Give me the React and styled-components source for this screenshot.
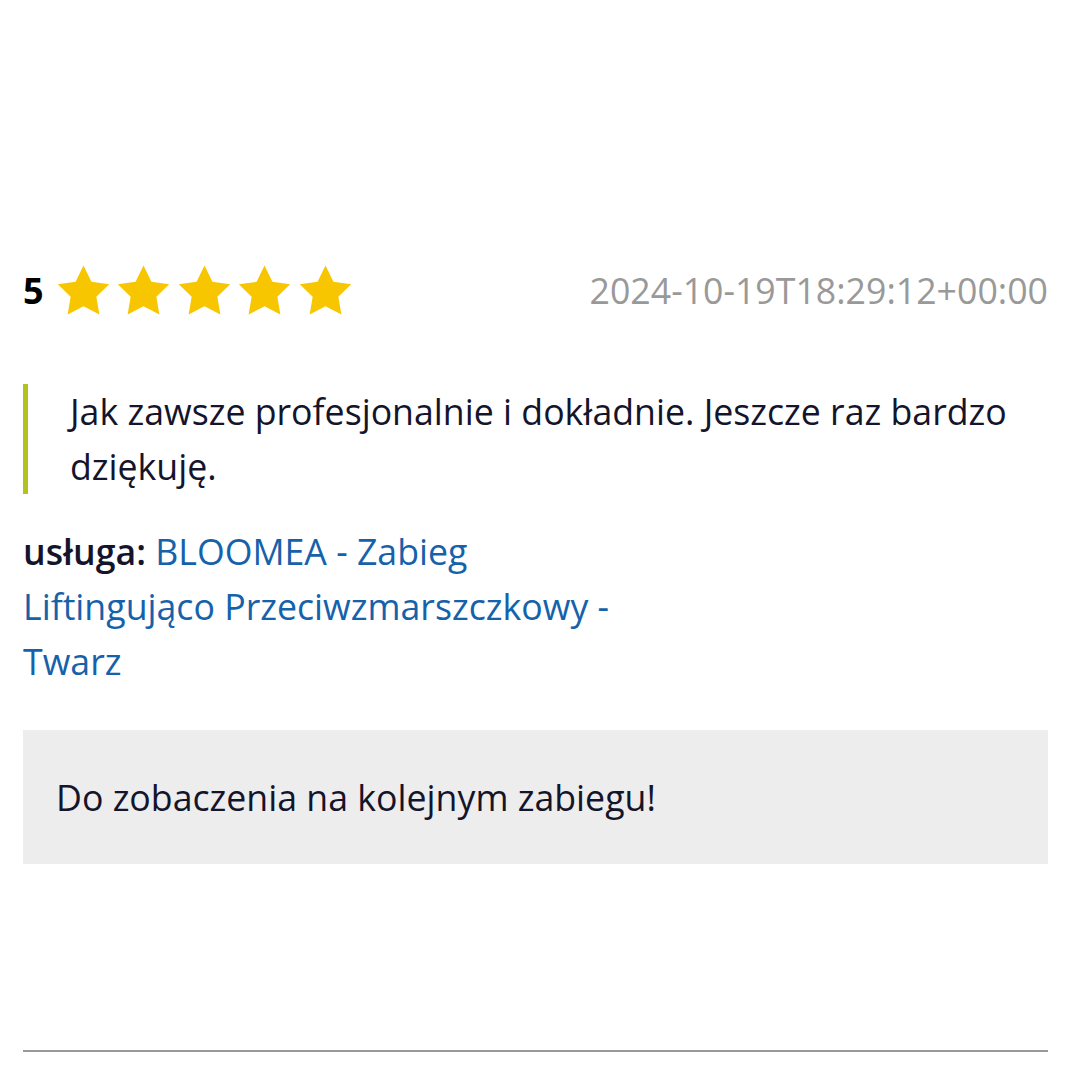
import styled, { createGlobalStyle } from 'styled-components';

const GlobalStyle = createGlobalStyle`
  body {
    margin: 0;
    background: #fff;
    font-family: 'Open Sans', 'Noto Sans', sans-serif;
    color: #14142b;
  }
`;

const Review = styled.article`
  padding: 260px 32px 0 23px;
`;

const Header = styled.div`
  display: flex;
  align-items: center;
  justify-content: space-between;
  height: 60px;
`;

const Rating = styled.div`
  display: flex;
  align-items: center;
  gap: 12px;
  font-size: 36px;
  font-weight: 700;
  color: #000;
`;

const Stars = styled.div`
  display: flex;
  gap: 5.5px;
`;

const Date = styled.time`
  font-size: 35.7px;
  color: #999;
`;

const Quote = styled.blockquote`
  margin: 64px 0 0;
  padding: 0 0 0 42px;
  border-left: 5px solid #b3c21d;
  font-size: 35.7px;
  line-height: 55px;
`;

const Service = styled.p`
  margin: 30px 0 0;
  max-width: 620px;
  font-size: 35.7px;
  line-height: 55px;

  strong {
    font-weight: 600;
  }

  a {
    color: #1662aa;
    text-decoration: none;
  }
`;

const Reply = styled.div`
  margin-top: 41px;
  background: #ededed;
  padding: 0 33px;
  height: 134px;
  display: flex;
  align-items: center;
  font-size: 35.7px;
`;

const Divider = styled.hr`
  margin: 186px 0 0;
  border: none;
  height: 2px;
  background: #999;
`;

const Star = () => (
  <svg width="55" height="53" viewBox="0 0 24 23">
    <path
      fill="#f7c600"
      d="M12 0.6l3.45 7.1 7.75 1.1-5.6 5.45 1.33 7.75L12 18.35 5.07 22l1.33-7.75L0.8 8.8l7.75-1.1z"
    />
  </svg>
);

export default function App() {
  return (
    <>
      <GlobalStyle />
      <Review>
        <Header>
          <Rating>
            5
            <Stars>
              {[0, 1, 2, 3, 4].map((i) => (
                <Star key={i} />
              ))}
            </Stars>
          </Rating>
          <Date>2024-10-19T18:29:12+00:00</Date>
        </Header>
        <Quote>Jak zawsze profesjonalnie i dokładnie. Jeszcze raz bardzo dziękuję.</Quote>
        <Service>
          <strong>usługa:</strong>{' '}
          <a href="#">BLOOMEA - Zabieg Liftingująco Przeciwzmarszczkowy - Twarz</a>
        </Service>
        <Reply>Do zobaczenia na kolejnym zabiegu!</Reply>
        <Divider />
      </Review>
    </>
  );
}
